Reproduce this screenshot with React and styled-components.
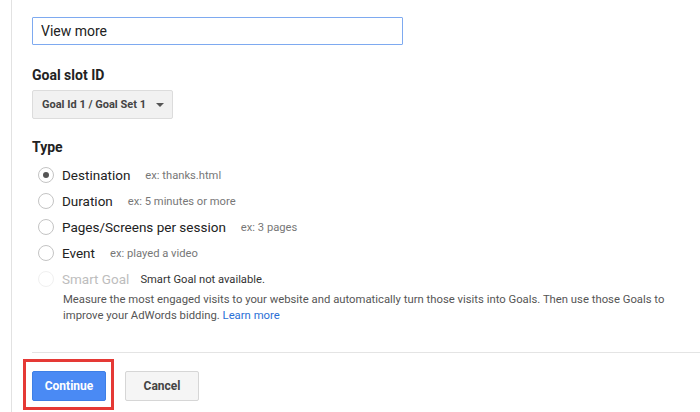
import React from 'react';
import styled, { createGlobalStyle } from 'styled-components';

const goalTypes = [
    { label: "Destination", hint: "ex: thanks.html", checked: true },
    { label: "Duration", hint: "ex: 5 minutes or more" },
    { label: "Pages/Screens per session", hint: "ex: 3 pages" },
    { label: "Event", hint: "ex: played a video" },
    { label: "Smart Goal", hint: "Smart Goal not available.", disabled: true },
];

export default function App()
{
    return (
        <Page>
            <GlobalStyle />
            <Panel>
                <TextInput defaultValue="View more" />

                <FieldLabel>Goal slot ID</FieldLabel>
                <Dropdown>
                    Goal Id 1 / Goal Set 1
                    <Caret />
                </Dropdown>

                <FieldLabel $small>Type</FieldLabel>
                <RadioList>
                    {goalTypes.map((t) =>
                        <RadioRow key={t.label}>
                            <Radio $checked={t.checked} $disabled={t.disabled} />
                            <RadioLabel $disabled={t.disabled}>{t.label}</RadioLabel>
                            <Hint $disabled={t.disabled}>{t.hint}</Hint>
                        </RadioRow>
                    )}
                </RadioList>
                <Description>
                    Measure the most engaged visits to your website and automatically turn those visits into Goals. Then use those Goals to improve your AdWords bidding. <Link>Learn more</Link>
                </Description>

                <Divider />

                <Buttons>
                    <Button $primary>
                        Continue
                        <Highlight />
                    </Button>
                    <Button>Cancel</Button>
                </Buttons>
            </Panel>
        </Page>
    );
}

const GlobalStyle = createGlobalStyle`
    html, body {
        margin: 0;
        padding: 0;
        background: #fff;
        font-family: Roboto, "Liberation Sans", Arial, sans-serif;
    }
`

const Page = styled.div`
    height: 412px;
    padding-left: 11px;
    display: flex;
    overflow: hidden;
`

const Panel = styled.div`
    flex: 1;
    border-left: 1px solid #e2e2e2;
    padding: 17px 0 0 20px;
    display: flex;
    flex-direction: column;
    align-items: flex-start;
`

const TextInput = styled.input`
    box-sizing: border-box;
    width: 371px;
    height: 28px;
    border: 1px solid #7eaaf0;
    border-radius: 1px;
    padding: 0 8px;
    font-family: inherit;
    font-size: 14px;
    color: #222;
    outline: none;
`

const FieldLabel = styled.div`
    margin-top: ${p => p.$small ? 20 : 22}px;
    line-height: 17px;
    font-size: 14px;
    font-weight: 700;
    color: #222;
`

const Dropdown = styled.div`
    box-sizing: border-box;
    margin-top: 6px;
    height: 29px;
    width: 141px;
    padding: 0 8px 0 9px;
    display: flex;
    align-items: center;
    white-space: nowrap;
    background: #f1f1f1;
    border: 1px solid #dcdcdc;
    border-radius: 2px;
    font-size: 11px;
    font-weight: 700;
    color: #444;
`

const Caret = styled.span`
    margin-left: auto;
    border-left: 4px solid transparent;
    border-right: 4px solid transparent;
    border-top: 4px solid #555;
`

const RadioList = styled.div`
    margin-top: 6px;
    display: flex;
    flex-direction: column;
`

const RadioRow = styled.div`
    height: 26px;
    display: flex;
    align-items: center;
    padding-left: 6px;
`

const Radio = styled.span`
    box-sizing: border-box;
    width: 16px;
    height: 16px;
    border-radius: 50%;
    border: 1px solid ${p => p.$disabled ? "#f0f0f0" : "#c4c4c4"};
    background: #fff;
    display: flex;
    align-items: center;
    justify-content: center;
    margin-right: 8px;

    &::after {
        content: "";
        display: ${p => p.$checked ? "block" : "none"};
        width: 6px;
        height: 6px;
        border-radius: 50%;
        background: #555;
    }
`

const RadioLabel = styled.span`
    font-size: 13.5px;
    color: ${p => p.$disabled ? "#bdbdbd" : "#222"};
    margin-right: ${p => p.$disabled ? 11 : 15}px;
`

const Hint = styled.span`
    font-size: 11.2px;
    color: ${p => p.$disabled ? "#333" : "#777"};
`

const Description = styled.p`
    margin: 0;
    padding-left: 31px;
    width: 612px;
    font-size: 11.3px;
    line-height: 16px;
    color: #555;
`

const Link = styled.span`
    color: #2a6fd6;
    cursor: pointer;
`

const Divider = styled.div`
    align-self: stretch;
    margin-top: 28px;
    height: 1px;
    background: #e4e4e4;
`

const Buttons = styled.div`
    margin-top: 18px;
    display: flex;
    gap: 19px;
`

const Button = styled.button`
    position: relative;
    box-sizing: border-box;
    width: 74px;
    height: 30px;
    border-radius: 2px;
    border: 1px solid ${p => p.$primary ? "#3d7fe6" : "#d6d6d6"};
    background: ${p => p.$primary ? "#4a8af4" : "#f5f5f5"};
    color: ${p => p.$primary ? "#fff" : "#444"};
    font-family: inherit;
    font-size: 12px;
    font-weight: 700;
    cursor: pointer;
`

const Highlight = styled.span`
    position: absolute;
    left: -10px;
    top: -13px;
    right: -9px;
    bottom: -10px;
    border: 3px solid #e53935;
    pointer-events: none;
`
